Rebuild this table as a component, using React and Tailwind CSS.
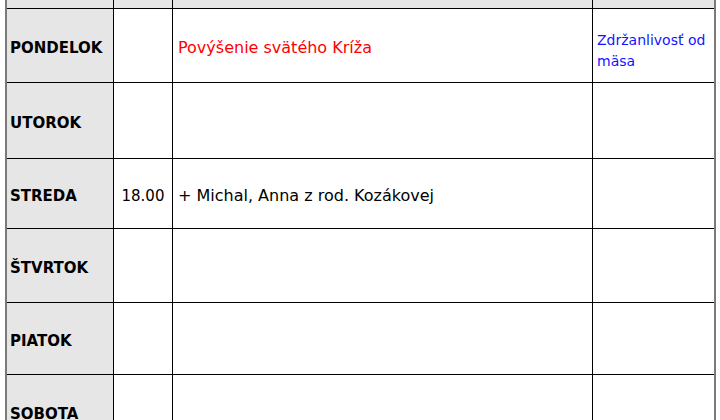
import React from "react";

// riadky rozpisu omší
const rows = [
  { day: "PONDELOK", time: "", text: "Povýšenie svätého Kríža", textColor: "text-[#ff0000]", note: "Zdržanlivosť od mäsa", h: "h-[74px]" },
  { day: "UTOROK", time: "", text: "", note: "", h: "h-[76px]" },
  { day: "STREDA", time: "18.00", text: "+ Michal, Anna z rod. Kozákovej", textColor: "text-black", note: "", h: "h-[70px]" },
  { day: "ŠTVRTOK", time: "", text: "", note: "", h: "h-[74px]" },
  { day: "PIATOK", time: "", text: "", note: "", h: "h-[72px]" },
  { day: "SOBOTA", time: "", text: "", note: "", h: "h-[74px]" },
];

const cols = "grid grid-cols-[107px_59px_420px_121px]";

export default function App() {
  return (
    <div className="w-[720px] h-[420px] overflow-hidden bg-white font-['DejaVu_Sans',sans-serif]">
      <div className="ml-[5px] w-[711px] border-l-2 border-r-2 border-[#7a7a7a]">
        {/* hlavička (odrezaná) */}
        <div className={`${cols} h-[9px] border-b border-black bg-[#e6e6e6]`}>
          <div className="border-r border-black" />
          <div className="border-r border-black" />
          <div className="border-r border-black" />
          <div />
        </div>

        {rows.map((r) => (
          <div key={r.day} className={`${cols} ${r.h} border-b border-black`}>
            <div className="flex items-center border-r border-black bg-[#e6e6e6] pl-[3px] pt-[5px] text-[15px] font-bold text-black">
              {r.day}
            </div>
            <div className="flex items-center justify-center border-r border-black pt-[5px] text-[15px] text-black">
              {r.time}
            </div>
            <div className={`flex items-center border-r border-black pl-[5px] pt-[5px] text-[16px] ${r.textColor || ""}`}>
              {r.text}
            </div>
            <div className="flex items-center pl-[4px] pr-1 pt-[10px] text-[14px] leading-[21px] text-[#1414ff]">
              {r.note}
            </div>
          </div>
        ))}
      </div>
    </div>
  );
}
